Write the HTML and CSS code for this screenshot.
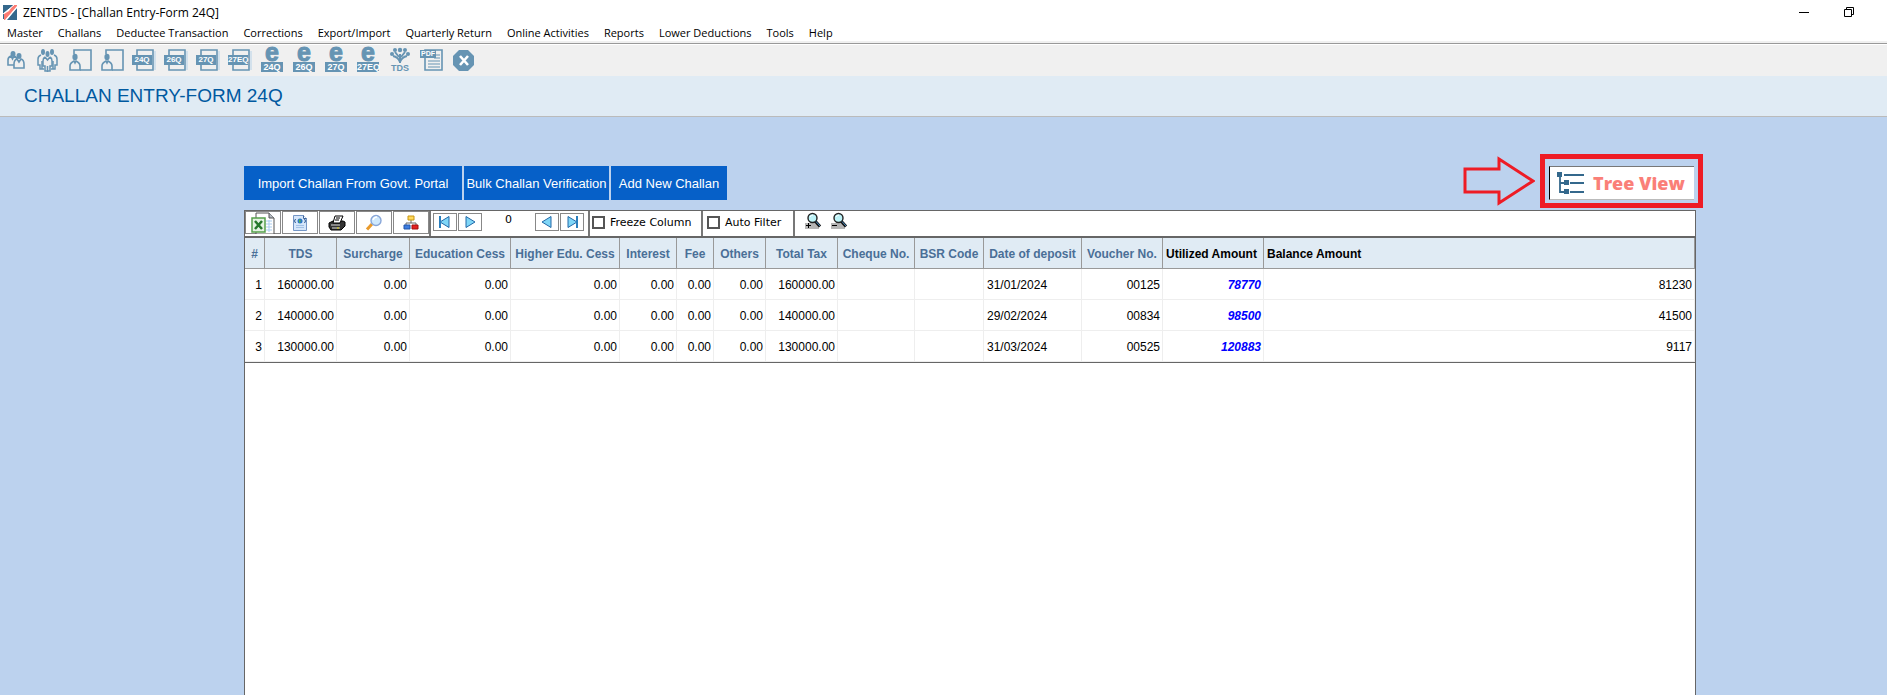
FILE: index.html
```html
<!DOCTYPE html>
<html lang="en">
<head>
  <meta charset="UTF-8">
  <title>ZENTDS - [Challan Entry-Form 24Q]</title>
  <meta name="viewport" content="width=device-width, initial-scale=1.0">
  <link rel="stylesheet" href="styles.css">
</head>
<body>
  <header class="titlebar">
    <svg class="app-logo" width="14" height="15" viewBox="0 0 14 15">
      <path d="M0 0h11L1 8v6H0z" fill="#34688c"/>
      <path d="M10 0h4v1L2 15H1V9l5-3z" fill="#fb7b72"/>
      <path d="M14 3v12H4z" fill="#34688c"/>
      <path d="M0 9L11 0M3 15L14 2" stroke="#fff" stroke-width="1"/>
    </svg>
    <span class="app-title">ZENTDS - [Challan Entry-Form 24Q]</span>
    <div class="window-buttons">
      <button aria-label="Minimize"><svg width="12" height="12" viewBox="0 0 12 12"><path d="M1 6.500h10" stroke="#000"/></svg></button>
      <button aria-label="Restore"><svg width="12" height="12" viewBox="0 0 12 12" fill="none" stroke="#000"><path d="M1.500 3.500h7v7h-7zM3.500 3.500v-2h7v7h-2"/></svg></button>
    </div>
  </header>

  <nav class="menubar">
    <a href="#">Master</a>
    <a href="#">Challans</a>
    <a href="#">Deductee Transaction</a>
    <a href="#">Corrections</a>
    <a href="#">Export/Import</a>
    <a href="#">Quarterly Return</a>
    <a href="#">Online Activities</a>
    <a href="#">Reports</a>
    <a href="#">Lower Deductions</a>
    <a href="#">Tools</a>
    <a href="#">Help</a>
  </nav>

  <!-- shared icon shapes -->
  <svg class="sprites" width="0" height="0">
    <symbol id="person-card" viewBox="0 0 30 28">
      <path d="M10 8V4h17v20H16" fill="none" stroke="#6694b3" stroke-width="1.600"/>
      <ellipse cx="11" cy="11" rx="2.600" ry="3.200" fill="#6694b3"/>
      <path d="M6 24v-4q0-3 4-5l1 2 1-2q4 2 4 5v4z" fill="#f0f0f0" stroke="#6694b3" stroke-width="1.600"/>
    </symbol>
    <symbol id="form-page" viewBox="0 0 30 28">
      <path d="M26 5h2v19h-2z" fill="#d3e1ec"/>
      <path d="M9 4h16v20H9z" fill="#f0f0f0" stroke="#6694b3" stroke-width="1.600"/>
    </symbol>
    <symbol id="nav-prev" viewBox="0 0 14 14">
      <path d="M11 1.500v11L2 7z" fill="#7fd6f7" stroke="#2268a8"/>
    </symbol>
    <symbol id="nav-next" viewBox="0 0 14 14">
      <path d="M3 1.500v11L12 7z" fill="#7fd6f7" stroke="#2268a8"/>
    </symbol>
    <symbol id="lens" viewBox="0 0 18 18">
      <path d="M1 11h10l4 2v4H1z" fill="#b5b5b5"/>
      <circle cx="8.500" cy="6" r="4.500" fill="#bdf3f8" stroke="#222" stroke-width="1.400"/>
      <path d="M11.500 9.500l4.500 5" stroke="#111" stroke-width="3"/>
      <path d="M12 9.500l4 4.500" stroke="#4b8fc4" stroke-width="1"/>
      <path d="M6 5q1-2 3-2" stroke="#fff" fill="none"/>
    </symbol>
  </svg>

  <div class="toolbar">
    <button aria-label="Deductors">
      <svg width="30" height="28" viewBox="0 0 30 28" fill="#f0f0f0" stroke="#6694b3" stroke-width="1.600">
        <path d="M8 19v-5q0-3 3-4l1.500 3 1.500-3q3 1 3 4v5z"/>
        <path d="M14 22v-4q0-4 3-5l2 3 2-3q3 1 3 5v4z"/>
        <g fill="#6694b3" stroke="none"><ellipse cx="13" cy="8" rx="2.500" ry="3"/><ellipse cx="19" cy="10" rx="2.500" ry="3"/></g>
      </svg>
    </button>
    <button aria-label="Employees">
      <svg width="30" height="28" viewBox="0 0 30 28" fill="none" stroke="#6694b3" stroke-width="1.500">
        <path d="M9 9q-3 1-3 4v6h2v4h4M22 9q3 1 3 4v6h-2v4h-4M10 15v8M21 15v8"/>
        <path d="M13 11q-2 1-2 4v5h2v5h5v-5h2v-5q0-3-2-4M15.500 20v6M13 11l2.500 3 2.500-3"/>
        <g fill="#6694b3" stroke="none"><ellipse cx="11" cy="6" rx="2" ry="3"/><ellipse cx="15.500" cy="8" rx="2" ry="3"/><ellipse cx="20" cy="6" rx="2" ry="3"/></g>
      </svg>
    </button>
    <button aria-label="Employee details"><svg width="30" height="28"><use href="#person-card"/></svg></button>
    <button aria-label="Deductee details"><svg width="30" height="28"><use href="#person-card"/></svg></button>
    <button class="form"><svg width="30" height="28"><use href="#form-page"/></svg><span class="tag">24Q</span></button>
    <button class="form"><svg width="30" height="28"><use href="#form-page"/></svg><span class="tag">26Q</span></button>
    <button class="form"><svg width="30" height="28"><use href="#form-page"/></svg><span class="tag">27Q</span></button>
    <button class="form"><svg width="30" height="28"><use href="#form-page"/></svg><span class="tag">27EQ</span></button>
    <button class="efile"><b>e</b><span class="tag">24Q</span></button>
    <button class="efile"><b>e</b><span class="tag">26Q</span></button>
    <button class="efile"><b>e</b><span class="tag">27Q</span></button>
    <button class="efile"><b>e</b><span class="tag">27EQ</span></button>
    <button class="tds">
      <svg width="22" height="17" viewBox="0 0 22 17" fill="none" stroke="#6694b3" stroke-width="2">
        <path d="M11 16V7M11 15Q9 10 4 9M11 15q2-5 7-6M10 10L6 5M12 10l4-5"/>
        <g fill="#6694b3" stroke="none"><circle cx="11" cy="3" r="2.200"/><circle cx="6" cy="3" r="2"/><circle cx="16" cy="3" r="2"/><circle cx="3" cy="7" r="2"/><circle cx="19" cy="7" r="2"/></g>
      </svg>
      <span>TDS</span>
    </button>
    <button class="pdf">
      <svg width="30" height="28" viewBox="0 0 30 28" fill="none" stroke="#6694b3">
        <path d="M9 4h17v20H9z" stroke-width="1.600"/>
        <path d="M18 9h6M18 12h6M12 15h12M12 18h12M12 21h12"/>
      </svg>
      <span class="tag">PDF</span>
    </button>
    <button aria-label="Exit">
      <svg width="30" height="28" viewBox="0 0 30 28">
        <path d="M11 4h9l6 6v9l-6 6h-9l-6-6v-9z" fill="#6694b3"/>
        <path d="M12 10l8 9M20 10l-8 9" stroke="#fff" stroke-width="2.600"/>
      </svg>
    </button>
  </div>

  <div class="page-head"><h1>CHALLAN ENTRY-FORM 24Q</h1></div>

  <main>
    <div class="actions">
      <button class="action import">Import Challan From Govt. Portal</button>
      <button class="action bulk">Bulk Challan Verification</button>
      <button class="action add">Add New Challan</button>
      <div class="tree-area">
        <svg class="arrow" width="72" height="50" viewBox="0 0 72 50">
          <path d="M2 13h34V3l34 22-34 22V36H2z" fill="none" stroke="#ee1c25" stroke-width="3"/>
        </svg>
        <div class="highlight"></div>
        <button class="tree-btn">
          <svg width="28" height="24" viewBox="0 0 28 24">
            <path d="M3 2v19h6M3 12h6M7 4h20M13 12h14M13 21h14" fill="none" stroke="#34688c" stroke-width="1.800"/>
            <path d="M0 1h5v5H0zM7 9h5v5H7zM7 18h5v5H7z" fill="#34688c"/>
          </svg>
          <span>Tree View</span>
        </button>
      </div>
    </div>

    <section class="grid-panel">
      <div class="grid-tools">
        <div class="icon-group">
          <button class="box" aria-label="Export to Excel">
            <svg width="24" height="22" viewBox="0 0 24 22">
              <path d="M5 1h13l5 5v16H5z" fill="#fff" stroke="#555"/>
              <path d="M18 1v5h5" fill="#b5bcc4" stroke="#555"/>
              <path d="M15 9h6M15 12h6M15 15h6M15 18h6M18 8v12" stroke="#a9cdf0"/>
              <path d="M1 6h13v14H1z" fill="#e4f3e2" stroke="#55a04b" stroke-width="1.500"/>
              <path d="M4 9l7 8M11 9l-7 8" stroke="#26782c" stroke-width="2.500"/>
            </svg>
          </button>
          <button class="box" aria-label="Export to HTML">
            <svg width="16" height="18" viewBox="0 0 16 18">
              <path d="M1.500 1.500h10l3 3v12h-13z" fill="#d5e6fa" stroke="#7496c6"/>
              <path d="M11.500 1.500v3h3" fill="#fff" stroke="#3e659c"/>
              <path d="M4 11.500h8M4 13.500h8" stroke="#a3c1e6"/>
              <circle cx="8" cy="7" r="2.500" fill="#2c78c4"/><path d="M7 5l2 2-2 2z" fill="#56b44e"/>
              <path d="M3.500 5L2.500 7l1 2M12.500 5l1 2-1 2" fill="none" stroke="#27518b"/>
            </svg>
          </button>
          <button class="box" aria-label="Print">
            <svg width="18" height="16" viewBox="0 0 18 16" stroke="#000">
              <path d="M1 8l4-2h10l2 1v4l-4 4H3l-2-3z" fill="#333"/>
              <path d="M5 8l2-7h8l-3 7z" fill="#fff"/>
              <path d="M8 3h4M7 5h4"/>
              <path d="M3 10h9M4 13h8" stroke="#ddd"/><path d="M9 13h2" stroke="#e3d700"/>
            </svg>
          </button>
          <button class="box" aria-label="Preview">
            <svg width="18" height="18" viewBox="0 0 18 18">
              <path d="M7 10l-5 5.500" stroke="#e99a2b" stroke-width="3"/>
              <circle cx="11" cy="6.500" r="5" fill="#cfe9fd" stroke="#88a6d8" stroke-width="1.400"/>
              <path d="M8 6q1-3 4-3" stroke="#fff" stroke-width="1.500" fill="none"/>
            </svg>
          </button>
          <button class="box" aria-label="Group">
            <svg width="16" height="16" viewBox="0 0 16 16">
              <path d="M8 5v3M3 11V8h10v3" fill="none" stroke="#666"/>
              <path d="M5 1h6v4H5z" fill="#ffd95c" stroke="#c79511"/>
              <path d="M1 10h6v4H1z" fill="#3d7de0" stroke="#2155a8"/>
              <path d="M9 10h6v4H9z" fill="#e32020" stroke="#a30e0e"/>
            </svg>
          </button>
        </div>
        <div class="nav-group">
          <button class="step" aria-label="First"><svg width="14" height="14"><use href="#nav-prev"/><path d="M2 1v12" stroke="#2b7fbd" stroke-width="2"/></svg></button>
          <button class="step" aria-label="Next"><svg width="14" height="14"><use href="#nav-next"/></svg></button>
          <output class="record">0</output>
          <button class="step" aria-label="Previous"><svg width="14" height="14"><use href="#nav-prev"/></svg></button>
          <button class="step" aria-label="Last"><svg width="14" height="14"><use href="#nav-next"/><path d="M12 1v12" stroke="#2b7fbd" stroke-width="2"/></svg></button>
        </div>
        <label class="check freeze"><input type="checkbox">Freeze Column</label>
        <label class="check filter"><input type="checkbox">Auto Filter</label>
        <div class="zoom-group">
          <button aria-label="Zoom in"><svg width="18" height="18"><use href="#lens"/><path d="M2 13.500h5M4.500 11v5" stroke="#000"/></svg></button>
          <button aria-label="Zoom out"><svg width="18" height="18"><use href="#lens"/><path d="M2 13.500h5" stroke="#000"/></svg></button>
        </div>
      </div>

      <table>
        <colgroup>
          <col class="c-no"><col class="c-tds"><col class="c-sur"><col class="c-edu"><col class="c-high">
          <col class="c-int"><col class="c-fee"><col class="c-oth"><col class="c-tot"><col class="c-chq">
          <col class="c-bsr"><col class="c-date"><col class="c-vou"><col class="c-util"><col>
        </colgroup>
        <thead>
          <tr>
            <th>#</th><th>TDS</th><th>Surcharge</th><th>Education Cess</th><th>Higher Edu. Cess</th>
            <th>Interest</th><th>Fee</th><th>Others</th><th>Total Tax</th><th>Cheque No.</th>
            <th>BSR Code</th><th>Date of deposit</th><th>Voucher No.</th>
            <th class="calc">Utilized Amount</th><th class="calc">Balance Amount</th>
          </tr>
        </thead>
        <tbody>
          <tr>
            <td>1</td><td>160000.00</td><td>0.00</td><td>0.00</td><td>0.00</td><td>0.00</td><td>0.00</td><td>0.00</td>
            <td>160000.00</td><td></td><td></td><td class="date">31/01/2024</td><td>00125</td><td class="used">78770</td><td>81230</td>
          </tr>
          <tr>
            <td>2</td><td>140000.00</td><td>0.00</td><td>0.00</td><td>0.00</td><td>0.00</td><td>0.00</td><td>0.00</td>
            <td>140000.00</td><td></td><td></td><td class="date">29/02/2024</td><td>00834</td><td class="used">98500</td><td>41500</td>
          </tr>
          <tr>
            <td>3</td><td>130000.00</td><td>0.00</td><td>0.00</td><td>0.00</td><td>0.00</td><td>0.00</td><td>0.00</td>
            <td>130000.00</td><td></td><td></td><td class="date">31/03/2024</td><td>00525</td><td class="used">120883</td><td>9117</td>
          </tr>
        </tbody>
      </table>
    </section>
  </main>
</body>
</html>
```
FILE: styles.css
```css
* {
  box-sizing: border-box;
}
body {
  margin: 0;
  min-height: 100vh;
  display: flex;
  flex-direction: column;
  background: #bcd2ee;
  font-family: "Liberation Sans", Arial, sans-serif;
  font-size: 12px;
  color: #000;
}
button {
  padding: 0;
  border: none;
  background: none;
  font-family: inherit;
  cursor: pointer;
}
svg {
  display: block;
}
.sprites {
  position: absolute;
}

/* window title and menu */
.titlebar {
  display: flex;
  align-items: center;
  height: 24px;
  padding-left: 3px;
  background: #fff;
  font-family: "Open Sans", sans-serif;
}
.app-title {
  margin-left: 6px;
}
.window-buttons {
  display: flex;
  gap: 33px;
  margin-left: auto;
  margin-right: 32px;
}
.menubar {
  display: flex;
  gap: 15px;
  height: 20px;
  padding-left: 7px;
  background: #fff;
  border-bottom: 1px solid #999;
  box-shadow: inset 0 -2px #f0f0f0;
  font-family: "Open Sans", sans-serif;
  font-size: 11px;
  line-height: 18px;
}
.menubar a {
  color: #000;
  text-decoration: none;
  white-space: nowrap;
}

/* icon toolbar */
.toolbar {
  display: flex;
  height: 32px;
  background: #f0f0f0;
  border-top: 1px solid #fff;
}
.toolbar button {
  position: relative;
  width: 32px;
  height: 31px;
  padding-bottom: 2px;
  color: #6694b3;
}
.tag {
  background: #6694b3;
  color: #fff;
  font-size: 9px;
  line-height: 10px;
  font-weight: bold;
}
.form .tag {
  position: absolute;
  left: 4px;
  top: 10px;
  width: 20px;
  font-size: 8px;
}
.efile b {
  display: block;
  height: 15px;
  font-size: 25px;
  line-height: 11px;
  -webkit-text-stroke: 1px #6694b3;
}
.efile .tag {
  display: block;
  width: 22px;
  margin: 0 auto;
}
.tds svg {
  margin: 0 auto;
}
.tds span {
  display: block;
  font-size: 9px;
  line-height: 8px;
  font-weight: bold;
}
.pdf .tag {
  position: absolute;
  left: 4px;
  top: 5px;
  width: 16px;
  font-size: 7px;
  line-height: 8px;
}

.page-head {
  height: 41px;
  padding-left: 24px;
  background: #e0ebf4;
  border-bottom: 1px solid #bbb;
}
h1 {
  margin: 0;
  font-size: 19px;
  line-height: 40px;
  font-weight: normal;
  color: #0059a0;
}

main {
  flex: 1;
  display: flex;
  flex-direction: column;
  padding: 49px 191px 0 244px;
}
.actions {
  display: flex;
  gap: 2px;
  height: 34px;
  margin-bottom: 10px;
}
.action {
  background: #0660c8;
  color: #fff;
  font-size: 13px;
  white-space: nowrap;
}
.import {
  width: 218px;
}
.bulk {
  width: 145px;
}
.add {
  width: 116px;
}
.tree-area {
  position: relative;
  margin-left: auto;
  margin-right: 2px;
}
.tree-btn {
  display: flex;
  align-items: center;
  gap: 8px;
  width: 145px;
  height: 34px;
  padding-left: 7px;
  background: #fff;
  border-left: 1px solid #000;
  border-top: 1px solid #777;
  border-bottom: 1px solid #bbb;
  font: 800 18px "Open Sans", sans-serif;
  color: #fa7f78;
  white-space: nowrap;
}
.highlight {
  position: absolute;
  inset: -12px -9px -8px;
  border: 5px solid #ee1c25;
  pointer-events: none;
}
.arrow {
  position: absolute;
  right: 159px;
  top: -10px;
}

/* challan grid */
.grid-panel {
  flex: 1;
  background: #fff;
  border: 1px solid #666;
  border-bottom: none;
}
.grid-tools {
  display: flex;
  height: 27px;
  border-bottom: 2px solid #666;
}
.icon-group {
  display: flex;
  gap: 1px;
  border-right: 2px solid #777;
}
.box {
  display: flex;
  align-items: center;
  justify-content: center;
  width: 36px;
  height: 23px;
  border: 1px solid #888;
}
.nav-group {
  display: flex;
  gap: 1px;
  padding: 2px 4px 2px 2px;
  border-right: 2px solid #777;
}
.step {
  display: flex;
  align-items: center;
  justify-content: center;
  width: 24px;
  height: 18px;
  border: 1px solid #888;
}
.record {
  width: 51px;
  font: 11px/14px "DejaVu Sans", sans-serif;
  text-align: center;
}
.check {
  display: flex;
  align-items: center;
  gap: 5px;
  padding: 0 0 2px 2px;
  border-right: 2px solid #777;
  font: 11px "DejaVu Sans", sans-serif;
}
.check input {
  appearance: none;
  width: 13px;
  height: 13px;
  margin: 0;
  border: 2px solid #555;
}
.freeze {
  width: 113px;
}
.filter {
  width: 92px;
  padding-left: 4px;
}
.zoom-group {
  display: flex;
  gap: 8px;
  padding: 1px 9px;
}
.zoom-group button {
  height: 18px;
}

table {
  width: 100%;
  table-layout: fixed;
  border-collapse: separate;
  border-spacing: 0;
  border-bottom: 1px solid #666;
}
th {
  height: 31px;
  padding: 2px 0 0;
  background: #e0ebf4;
  border-right: 1px solid #999;
  border-bottom: 1px solid #999;
  color: #4a6f97;
  white-space: nowrap;
}
th.calc {
  padding-left: 3px;
  color: #000;
  text-align: left;
}
td {
  height: 31px;
  padding: 2px 2px 0;
  border-right: 1px solid #eee;
  border-bottom: 1px solid #eee;
  text-align: right;
}
td.date {
  padding-left: 3px;
  text-align: left;
}
td.used {
  color: #00f;
  font-weight: bold;
  font-style: italic;
}
.c-no { width: 20px; }
.c-tds { width: 72px; }
.c-sur { width: 73px; }
.c-edu { width: 101px; }
.c-high { width: 109px; }
.c-int { width: 57px; }
.c-fee { width: 37px; }
.c-oth { width: 52px; }
.c-tot { width: 72px; }
.c-chq { width: 77px; }
.c-bsr { width: 69px; }
.c-date { width: 98px; }
.c-vou { width: 81px; }
.c-util { width: 101px; }
```
